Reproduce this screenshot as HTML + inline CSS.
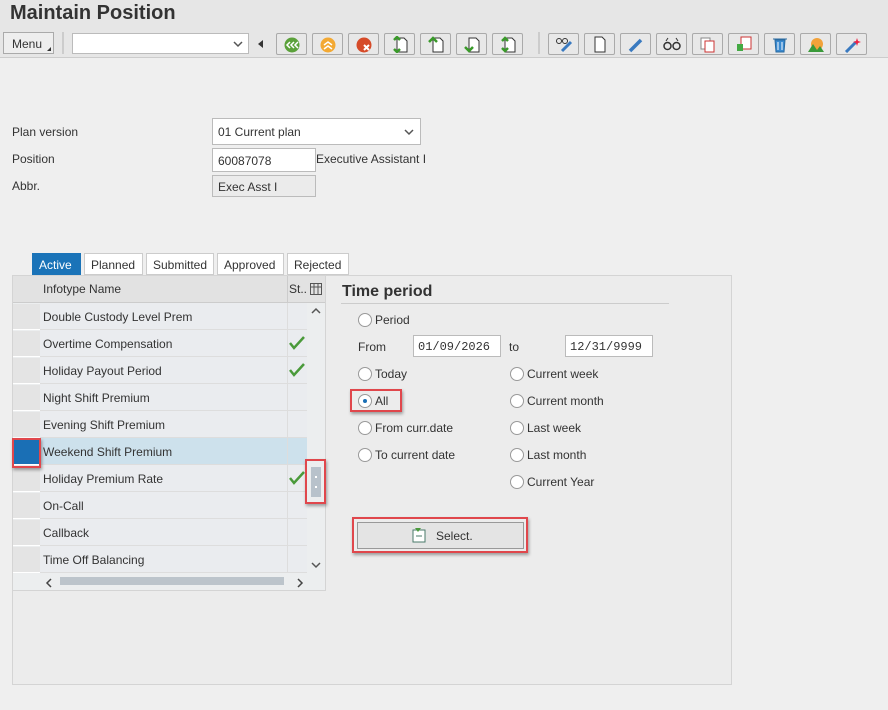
<!DOCTYPE html>
<html><head><style>
*{box-sizing:border-box;margin:0;padding:0}
body{width:888px;height:710px;background:#efefef;font-family:"Liberation Sans",Arial,sans-serif;font-size:12px;color:#333;position:relative;overflow:hidden}
.a{position:absolute}
.btn{position:absolute;top:33px;width:31px;height:22px;border:1px solid #aaa;background:#e8e8e8;border-radius:2px}
.btn svg{position:absolute;left:6px;top:2px}
.inp{position:absolute;background:#fff;border:1px solid #bbb;height:24px;padding:5px 5px;font-size:12px}
.row{position:absolute;left:40px;width:267px;height:27px;border-bottom:1px solid #ddd;background:#eaecef;padding:7px 3px;font-size:12px}
.sel{position:absolute;left:13px;width:27px;height:26px;background:#e4e4e4;border-bottom:1px solid #fff}
.st{position:absolute;left:287px;width:20px;height:27px;border-left:1px solid #ddd;border-bottom:1px solid #ddd;background:#eaecef}
.rad{position:absolute;width:14px;height:14px;border:1px solid #999;border-radius:50%;background:#fff}
.lbl{position:absolute;font-size:12px}
.tab{position:absolute;top:253px;height:22px;background:#fff;border:1px solid #ccc;padding:4px 6px;font-size:12px}
.red{position:absolute;border:2px solid #e0474c;box-shadow:1px 2px 3px rgba(0,0,0,.35)}
</style></head><body>
<div class="a" style="left:0;top:0;width:888px;height:58px;background:#e6e6e6;border-bottom:1px solid #ccc"></div>
<div class="a" style="left:10px;top:2px;font-size:20px;font-weight:bold;color:#333">Maintain Position</div>
<div class="a" style="left:3px;top:32px;width:51px;height:22px;border:1px solid #aaa;background:#eee;padding:4px 8px;font-size:12px">Menu</div>
<div class="a" style="left:47px;top:47px;border-left:4px solid transparent;border-bottom:4px solid #333"></div>
<div class="a" style="left:62px;top:32px;width:2px;height:22px;background:#ccc"></div>
<div class="inp" style="left:72px;top:33px;width:177px;height:21px"></div>
<svg class="a" style="left:233px;top:40px" width="10" height="8"><path d="M1 2l4 4 4-4" stroke="#555" stroke-width="1.5" fill="none"/></svg>
<div class="a" style="left:258px;top:40px;border-right:5px solid #333;border-top:4px solid transparent;border-bottom:4px solid transparent"></div>
<div class="btn" style="left:276px"><svg width="18" height="17"><circle cx="9" cy="9" r="7.5" fill="#5ba13a"/><path d="M7 6l-3 3 3 3M11 6l-3 3 3 3M15 6l-3 3 3 3" stroke="#fff" fill="none" stroke-width="1.5"/></svg></div>
<div class="btn" style="left:312px"><svg width="18" height="17"><circle cx="9" cy="9" r="7.5" fill="#f3a933"/><path d="M5 9l4-3 4 3M5 13l4-3 4 3" stroke="#fff" fill="none" stroke-width="1.5"/></svg></div>
<div class="btn" style="left:348px"><svg width="18" height="17"><circle cx="9" cy="9" r="7.5" fill="#d64b29"/><path d="M9 9l5 5M14 9l-5 5" stroke="#fff" stroke-width="2"/></svg></div>
<div class="btn" style="left:384px"><svg width="18" height="17"><path d="M6 2h7l3 3v11H6z" fill="#fff" stroke="#333"/><path d="M3 4l3-3 3 3M3 13l3 3 3-3" stroke="#3a9a2a" stroke-width="2.5" fill="none"/></svg></div>
<div class="btn" style="left:420px"><svg width="18" height="17"><path d="M6 2h7l3 3v11H6z" fill="#fff" stroke="#333"/><path d="M2 6l4-4 4 4" stroke="#3a9a2a" stroke-width="2.5" fill="none"/></svg></div>
<div class="btn" style="left:456px"><svg width="18" height="17"><path d="M6 2h7l3 3v11H6z" fill="#fff" stroke="#333"/><path d="M2 11l4 4 4-4" stroke="#3a9a2a" stroke-width="2.5" fill="none"/></svg></div>
<div class="btn" style="left:492px"><svg width="18" height="17"><path d="M6 2h7l3 3v11H6z" fill="#fff" stroke="#333"/><path d="M3 5l3-3 3 3M3 12l3 3 3-3" stroke="#3a9a2a" stroke-width="2.5" fill="none"/></svg></div>
<div class="a" style="left:538px;top:32px;width:2px;height:22px;background:#ccc"></div>
<div class="btn" style="left:548px"><svg width="20" height="17"><circle cx="4" cy="5" r="2.5" fill="none" stroke="#333"/><circle cx="10" cy="5" r="2.5" fill="none" stroke="#333"/><path d="M7 15l9-9" stroke="#3a7ac0" stroke-width="3"/></svg></div>
<div class="btn" style="left:584px"><svg width="18" height="17"><path d="M4 1h7l3 3v12H4z" fill="#fff" stroke="#333"/></svg></div>
<div class="btn" style="left:620px"><svg width="18" height="17"><path d="M3 15l11-11" stroke="#3a7ac0" stroke-width="3.5"/></svg></div>
<div class="btn" style="left:656px"><svg width="18" height="17"><circle cx="4.5" cy="10" r="3.5" fill="none" stroke="#333" stroke-width="1.5"/><circle cx="13.5" cy="10" r="3.5" fill="none" stroke="#333" stroke-width="1.5"/><path d="M3 5l2-3M15 5l-2-3" stroke="#333"/></svg></div>
<div class="btn" style="left:692px"><svg width="18" height="17"><rect x="2" y="2" width="9" height="11" fill="#fff" stroke="#888"/><rect x="6" y="5" width="9" height="11" fill="#fff" stroke="#c33"/></svg></div>
<div class="btn" style="left:728px"><svg width="18" height="17"><rect x="6" y="1" width="10" height="12" fill="#fff" stroke="#c33"/><rect x="2" y="8" width="6" height="7" fill="#4a4" /></svg></div>
<div class="btn" style="left:764px"><svg width="18" height="17"><path d="M2 3h14M4 4h10l-1 12H5z" fill="#3a8ad0" stroke="#2a6aa0"/><path d="M7 6v8M11 6v8" stroke="#fff"/></svg></div>
<div class="btn" style="left:800px"><svg width="18" height="17"><circle cx="10" cy="8" r="6" fill="#f2a23a"/><path d="M1 16l5-8 4 6 3-4 4 6z" fill="#3a9a3a"/></svg></div>
<div class="btn" style="left:836px"><svg width="18" height="17"><path d="M3 16l10-10" stroke="#3a7ac0" stroke-width="3"/><path d="M14 2l1 3 3 1-3 1-1 3-1-3-3-1 3-1z" fill="#e24"/></svg></div>

<div class="lbl" style="left:12px;top:125px">Plan version</div>
<div class="lbl" style="left:12px;top:152px">Position</div>
<div class="lbl" style="left:12px;top:179px">Abbr.</div>
<div class="inp" style="left:212px;top:118px;width:209px;height:27px;padding:6px 5px">01 Current plan</div>
<svg class="a" style="left:404px;top:128px" width="10" height="8"><path d="M1 2l4 4 4-4" stroke="#555" stroke-width="1.5" fill="none"/></svg>
<div class="inp" style="left:212px;top:148px;width:104px">60087078</div>
<div class="lbl" style="left:316px;top:152px">Executive Assistant I</div>
<div class="inp" style="left:212px;top:175px;width:104px;height:22px;padding:4px 5px;background:#ebebeb">Exec Asst I</div>

<div class="tab" style="left:32px;width:49px;background:#1a73b8;border-color:#1a73b8;color:#fff">Active</div>
<div class="tab" style="left:84px;width:59px">Planned</div>
<div class="tab" style="left:146px;width:68px">Submitted</div>
<div class="tab" style="left:217px;width:67px">Approved</div>
<div class="tab" style="left:287px;width:62px">Rejected</div>

<div class="a" style="left:12px;top:275px;width:720px;height:410px;border:1px solid #d4d4d4;background:#ececec"></div>
<div class="a" style="left:12px;top:275px;width:314px;height:316px;border:1px solid #d4d4d4;background:#eceeef"></div>
<div class="a" style="left:13px;top:276px;width:312px;height:27px;background:#e2e2e2;border-bottom:1px solid #ccc"></div>
<div class="lbl" style="left:43px;top:282px">Infotype Name</div>
<div class="a" style="left:287px;top:276px;width:1px;height:27px;background:#ccc"></div>
<div class="lbl" style="left:289px;top:282px">St..</div>
<div class="a" style="left:310px;top:283px"><svg width="12" height="12"><rect x=".5" y=".5" width="11" height="11" fill="none" stroke="#555"/><path d="M4 1v11M8 1v11M1 4h11" stroke="#555"/></svg></div>

<div class="sel" style="top:304px"></div><div class="row" style="top:303px">Double Custody Level Prem</div><div class="st" style="top:303px"></div>
<div class="sel" style="top:331px"></div><div class="row" style="top:330px">Overtime Compensation</div><div class="st" style="top:330px"></div>
<div class="sel" style="top:358px"></div><div class="row" style="top:357px">Holiday Payout Period</div><div class="st" style="top:357px"></div>
<div class="sel" style="top:385px"></div><div class="row" style="top:384px">Night Shift Premium</div><div class="st" style="top:384px"></div>
<div class="sel" style="top:412px"></div><div class="row" style="top:411px">Evening Shift Premium</div><div class="st" style="top:411px"></div>
<div class="sel" style="top:439px;background:#1a6fb5"></div><div class="row" style="top:438px;background:#cde1ec">Weekend Shift Premium</div><div class="st" style="top:438px;background:#cde1ec"></div>
<div class="sel" style="top:466px"></div><div class="row" style="top:465px">Holiday Premium Rate</div><div class="st" style="top:465px"></div>
<div class="sel" style="top:493px"></div><div class="row" style="top:492px">On-Call</div><div class="st" style="top:492px"></div>
<div class="sel" style="top:520px"></div><div class="row" style="top:519px">Callback</div><div class="st" style="top:519px"></div>
<div class="sel" style="top:547px"></div><div class="row" style="top:546px">Time Off Balancing</div><div class="st" style="top:546px"></div>
<svg class="a" style="left:288px;top:335px" width="18" height="16"><path d="M2 8l4 5 10-11" stroke="#4a9a3a" stroke-width="2.5" fill="none"/></svg>
<svg class="a" style="left:288px;top:362px" width="18" height="16"><path d="M2 8l4 5 10-11" stroke="#4a9a3a" stroke-width="2.5" fill="none"/></svg>
<svg class="a" style="left:288px;top:470px" width="18" height="16"><path d="M2 8l4 5 10-11" stroke="#4a9a3a" stroke-width="2.5" fill="none"/></svg>
<svg class="a" style="left:311px;top:307px" width="10" height="8"><path d="M1 6l4-4 4 4" stroke="#555" stroke-width="1.5" fill="none"/></svg>
<svg class="a" style="left:311px;top:561px" width="10" height="8"><path d="M1 2l4 4 4-4" stroke="#555" stroke-width="1.5" fill="none"/></svg>
<div class="a" style="left:311px;top:467px;width:10px;height:30px;background:#b8c2cb"></div>
<div class="a" style="left:315px;top:476px;width:2px;height:12px;border-top:2px solid #fff;border-bottom:2px solid #fff"></div>
<div class="red" style="left:305px;top:459px;width:21px;height:45px"></div>
<div class="red" style="left:12px;top:438px;width:29px;height:30px"></div>
<svg class="a" style="left:45px;top:578px" width="8" height="10"><path d="M6 1L2 5l4 4" stroke="#444" stroke-width="1.5" fill="none"/></svg>
<svg class="a" style="left:296px;top:578px" width="8" height="10"><path d="M2 1l4 4-4 4" stroke="#444" stroke-width="1.5" fill="none"/></svg>
<div class="a" style="left:60px;top:577px;width:224px;height:8px;background:#bcc4cb"></div>

<div class="a" style="left:342px;top:283px;font-size:16px;font-weight:bold">Time period</div>
<div class="a" style="left:341px;top:303px;width:328px;height:1px;background:#ccc"></div>
<div class="rad" style="left:358px;top:313px"></div><div class="lbl" style="left:375px;top:313px">Period</div>
<div class="lbl" style="left:358px;top:340px">From</div>
<div class="inp" style="left:413px;top:335px;width:88px;height:22px;font-family:'Liberation Mono',monospace;padding:4px">01/09/2026</div>
<div class="lbl" style="left:509px;top:340px">to</div>
<div class="inp" style="left:565px;top:335px;width:88px;height:22px;font-family:'Liberation Mono',monospace;padding:4px">12/31/9999</div>
<div class="rad" style="left:358px;top:367px"></div><div class="lbl" style="left:375px;top:367px">Today</div>
<div class="rad" style="left:358px;top:394px"></div><div class="a" style="left:363px;top:399px;width:4px;height:4px;border-radius:50%;background:#1a6fb5"></div><div class="lbl" style="left:375px;top:394px">All</div>
<div class="red" style="left:350px;top:389px;width:52px;height:23px"></div>
<div class="rad" style="left:358px;top:421px"></div><div class="lbl" style="left:375px;top:421px">From curr.date</div>
<div class="rad" style="left:358px;top:448px"></div><div class="lbl" style="left:375px;top:448px">To current date</div>
<div class="rad" style="left:510px;top:367px"></div><div class="lbl" style="left:527px;top:367px">Current week</div>
<div class="rad" style="left:510px;top:394px"></div><div class="lbl" style="left:527px;top:394px">Current month</div>
<div class="rad" style="left:510px;top:421px"></div><div class="lbl" style="left:527px;top:421px">Last week</div>
<div class="rad" style="left:510px;top:448px"></div><div class="lbl" style="left:527px;top:448px">Last month</div>
<div class="rad" style="left:510px;top:475px"></div><div class="lbl" style="left:527px;top:475px">Current Year</div>
<div class="a" style="left:357px;top:522px;width:167px;height:27px;background:#e4e4e4;border:1px solid #999"></div>
<svg class="a" style="left:412px;top:528px" width="14" height="15"><rect x="1" y="2" width="12" height="12" fill="#fff" stroke="#4a7a6a"/><path d="M3 0h6l-3 4z" fill="#4a9a3a"/><path d="M4 8h6" stroke="#4a7a6a"/></svg>
<div class="lbl" style="left:436px;top:529px">Select.</div>
<div class="red" style="left:352px;top:517px;width:176px;height:36px"></div>
</body></html>
